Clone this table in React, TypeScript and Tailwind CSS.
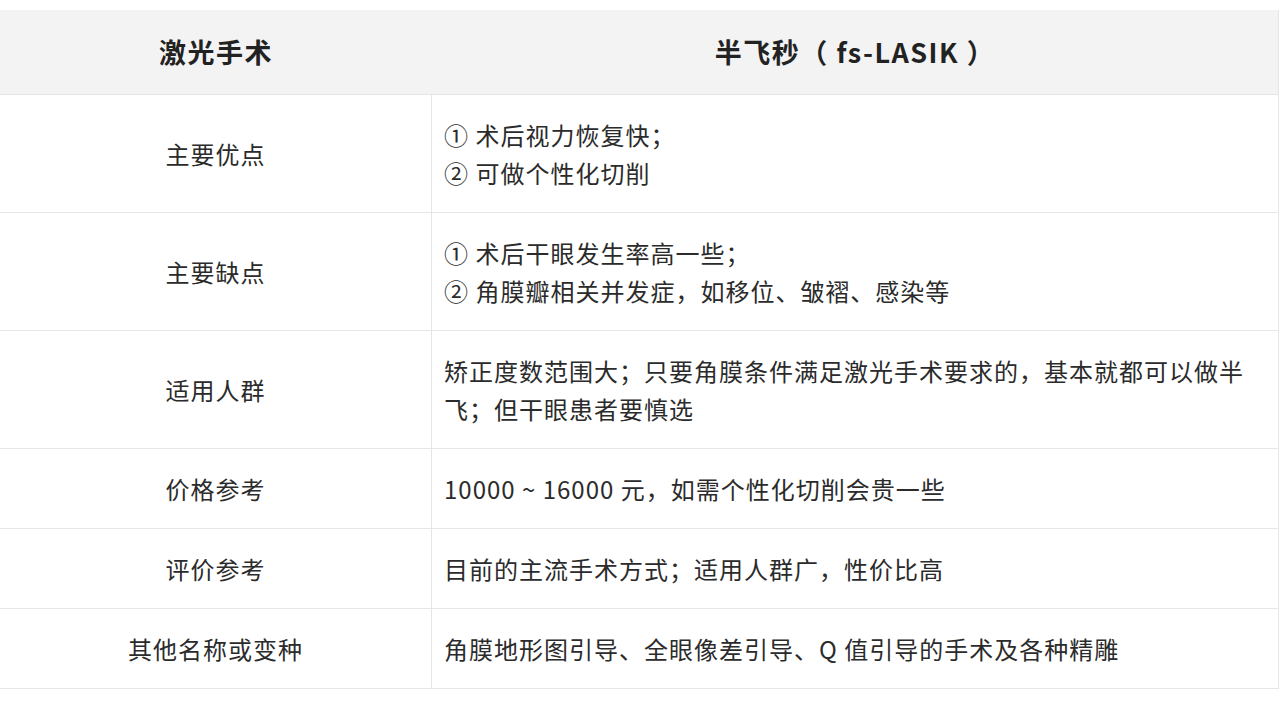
const rows: { label: string; lines: string[] }[] = [
  { label: "主要优点", lines: ["① 术后视力恢复快；", "② 可做个性化切削"] },
  { label: "主要缺点", lines: ["① 术后干眼发生率高一些；", "② 角膜瓣相关并发症，如移位、皱褶、感染等"] },
  { label: "适用人群", lines: ["矫正度数范围大；只要角膜条件满足激光手术要求的，基本就都可以做半", "飞；但干眼患者要慎选"] },
  { label: "价格参考", lines: ["10000 ~ 16000 元，如需个性化切削会贵一些"] },
  { label: "评价参考", lines: ["目前的主流手术方式；适用人群广，性价比高"] },
  { label: "其他名称或变种", lines: ["角膜地形图引导、全眼像差引导、Q 值引导的手术及各种精雕"] },
];

export default function App() {
  return (
    <div className="w-[1284px] h-[702px] bg-white pt-[10px] overflow-hidden font-['Noto_Sans_CJK_SC','Noto_Sans',sans-serif] text-[#2b2b2b]">
      <div className="w-[1279px] border-r border-[#e6e6e6]">
        <div className="grid grid-cols-[432px_1fr] bg-[#f3f3f3] border-b border-[#e6e6e6] h-[85px] items-center">
          <div className="text-center text-[27px] font-bold tracking-[1.5px] text-[#222]">激光手术</div>
          <div className="text-center text-[27px] font-bold tracking-[1.5px] text-[#222]">半飞秒（ fs-LASIK ）</div>
        </div>
        {rows.map((r) => (
          <div key={r.label} className="grid grid-cols-[432px_1fr] border-b border-[#e6e6e6]">
            <div className="flex items-center justify-center border-r border-[#e6e6e6] text-[24px] leading-[38px] tracking-[1px]">
              {r.label}
            </div>
            <div className="pt-[21px] pb-[20px] pl-[12px] pr-2 text-[24px] leading-[38px] tracking-[1px] whitespace-nowrap">
              {r.lines.map((l, i) => (
                <div key={i}>{l}</div>
              ))}
            </div>
          </div>
        ))}
      </div>
    </div>
  );
}
